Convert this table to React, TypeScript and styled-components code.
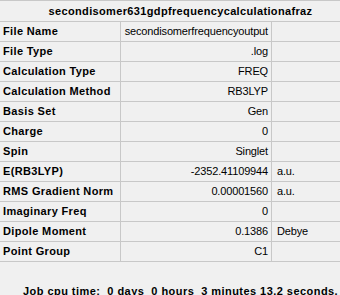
import styled, { createGlobalStyle } from "styled-components";

const GlobalStyle = createGlobalStyle`
  html, body {
    margin: 0;
    padding: 0;
    background: #f0f0f0;
    overflow: hidden;
  }
  body {
    font-family: "Liberation Sans", Arial, sans-serif;
    font-size: 11px;
    color: #000;
  }
`;

const Page = styled.div`
  width: 340px;
  height: 295px;
  overflow: hidden;
`;

const Sheet = styled.div`
  width: 361px;
  border-top: 1px solid #c8c8c8;
`;

const Title = styled.div`
  height: 20px;
  line-height: 20px;
  text-align: center;
  font-weight: bold;
  letter-spacing: 0.35px;
  border-bottom: 1px solid #c8c8c8;
  white-space: nowrap;
`;

const Row = styled.div`
  display: grid;
  grid-template-columns: 121px 151px 1fr;
  height: 20px;
  border-bottom: 1px solid #c8c8c8;
  box-sizing: border-box;
`;

const Cell = styled.div<{ $align?: "left" | "right"; $bold?: boolean; $last?: boolean }>`
  box-sizing: border-box;
  line-height: 19px;
  white-space: nowrap;
  overflow: hidden;
  text-align: ${(p) => p.$align ?? "left"};
  font-weight: ${(p) => (p.$bold ? "bold" : "normal")};
  letter-spacing: ${(p) => (p.$bold ? "0.35px" : "-0.15px")};
  padding: ${(p) => (p.$align === "right" ? "0 3px 0 0" : p.$bold ? "0 0 0 3px" : "0 0 0 5px")};
  border-right: ${(p) => (p.$last ? "none" : "1px solid #c8c8c8")};
`;

const CpuTime = styled.div`
  margin: 23px 0 0 23px;
  font-weight: bold;
  letter-spacing: 0.45px;
  line-height: 13px;
  white-space: pre;
`;

const rows: [string, string, string][] = [
  ["File Name", "secondisomerfrequencyoutput", ""],
  ["File Type", ".log", ""],
  ["Calculation Type", "FREQ", ""],
  ["Calculation Method", "RB3LYP", ""],
  ["Basis Set", "Gen", ""],
  ["Charge", "0", ""],
  ["Spin", "Singlet", ""],
  ["E(RB3LYP)", "-2352.41109944", "a.u."],
  ["RMS Gradient Norm", "0.00001560", "a.u."],
  ["Imaginary Freq", "0", ""],
  ["Dipole Moment", "0.1386", "Debye"],
  ["Point Group", "C1", ""],
];

export default function App() {
  return (
    <Page>
      <GlobalStyle />
      <Sheet>
        <Title>secondisomer631gdpfrequencycalculationafraz</Title>
        {rows.map(([label, value, unit]) => (
          <Row key={label}>
            <Cell $bold>{label}</Cell>
            <Cell $align="right">{value}</Cell>
            <Cell $last>{unit}</Cell>
          </Row>
        ))}
      </Sheet>
      <CpuTime>{"Job cpu time:  0 days  0 hours  3 minutes 13.2 seconds."}</CpuTime>
    </Page>
  );
}
